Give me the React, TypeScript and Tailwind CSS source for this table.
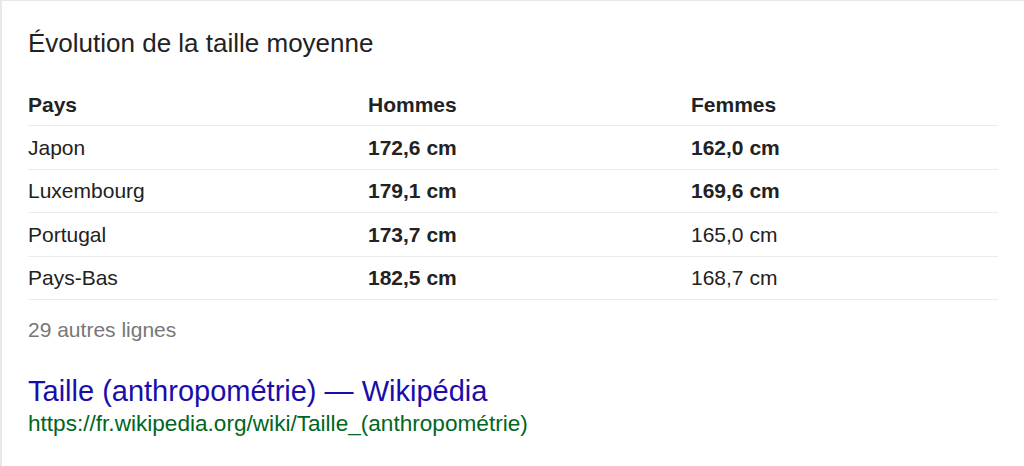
const rows = [
  { country: "Japon", men: "172,6 cm", women: "162,0 cm", menBold: true, womenBold: true },
  { country: "Luxembourg", men: "179,1 cm", women: "169,6 cm", menBold: true, womenBold: true },
  { country: "Portugal", men: "173,7 cm", women: "165,0 cm", menBold: true, womenBold: false },
  { country: "Pays-Bas", men: "182,5 cm", women: "168,7 cm", menBold: true, womenBold: false },
];

export default function App() {
  return (
    <div className="w-[1024px] h-[466px] bg-white overflow-hidden font-['Liberation_Sans',Arial,sans-serif] text-[#222]">
      <div className="h-full border-l-2 border-t border-[#e8e8e8] pl-[26px] pr-[26px] pt-[26px]">
        <h2 className="text-[26px] leading-[32px] text-[#222]">Évolution de la taille moyenne</h2>

        <div className="mt-[25px] w-full">
          <div className="grid grid-cols-[340px_323px_1fr] items-center h-[42px] border-b border-[#ebebeb] text-[21px] font-bold">
            <span>Pays</span>
            <span>Hommes</span>
            <span>Femmes</span>
          </div>
          {rows.map((r) => (
            <div
              key={r.country}
              className="grid grid-cols-[340px_323px_1fr] items-center h-[43.5px] border-b border-[#ebebeb] text-[21px]"
            >
              <span>{r.country}</span>
              <span className={r.menBold ? "font-bold" : ""}>{r.men}</span>
              <span className={r.womenBold ? "font-bold" : ""}>{r.women}</span>
            </div>
          ))}
        </div>

        <div className="mt-[17px] text-[21px] leading-[26px] text-[#777]">29 autres lignes</div>

        <div className="mt-[31px] flex flex-col">
          <a className="text-[29px] leading-[34px] text-[#1a0dab]">Taille (anthropométrie) — Wikipédia</a>
          <span className="mt-[3px] text-[22.6px] leading-[26px] text-[#006621]">
            https://fr.wikipedia.org/wiki/Taille_(anthropométrie)
          </span>
        </div>
      </div>
    </div>
  );
}
